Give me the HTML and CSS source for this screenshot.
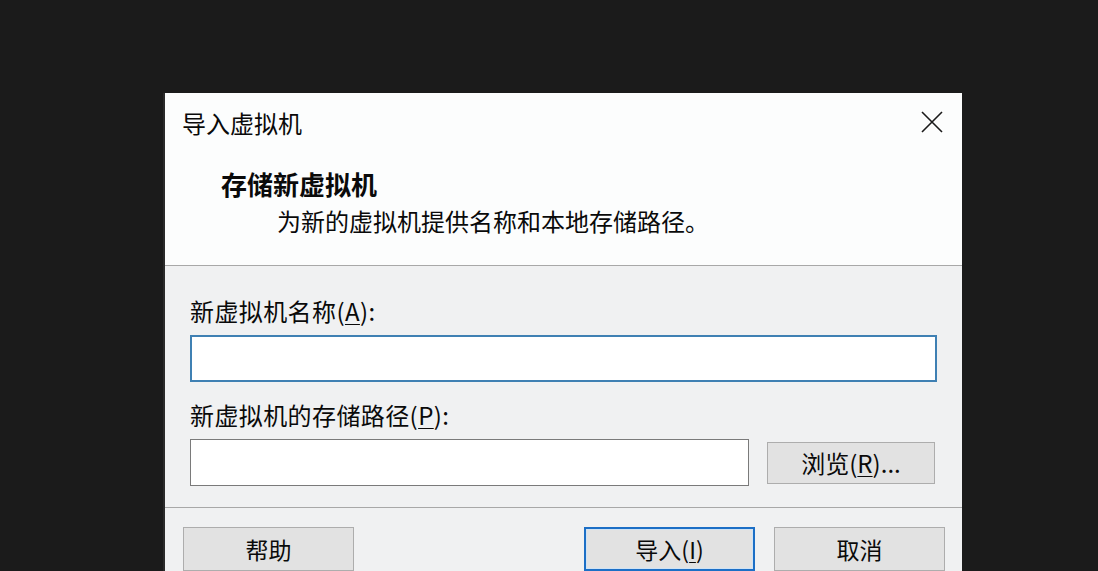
FILE: index.html
```html
<!DOCTYPE html>
<html lang="zh-CN">
<head>
<meta charset="utf-8">
<title>导入虚拟机</title>
<link rel="stylesheet" href="styles.css">
</head>
<body>
<div class="dialog">
  <div class="header">
    <div class="titlebar">
      <span class="title">导入虚拟机</span>
      <svg class="close" width="22" height="22" viewBox="0 0 22 22"><path d="M1 1 L21 21 M21 1 L1 21" stroke="#1a1a1a" stroke-width="1.6" fill="none"/></svg>
    </div>
    <div class="heading">存储新虚拟机</div>
    <div class="subtitle">为新的虚拟机提供名称和本地存储路径。</div>
  </div>
  <div class="content">
    <div class="label">新虚拟机名称(<u>A</u>):</div>
    <div class="input input-focus"></div>
    <div class="label label-second">新虚拟机的存储路径(<u>P</u>):</div>
    <div class="path-row">
      <div class="input input-path"></div>
      <div class="btn btn-browse">浏览(<u>R</u>)...</div>
    </div>
  </div>
  <div class="footer">
    <div class="btn">帮助</div>
    <div class="footer-right">
      <div class="btn btn-default">导入(<u>I</u>)</div>
      <div class="btn">取消</div>
    </div>
  </div>
</div>
</body>
</html>
```
FILE: styles.css
```css
html, body {
  margin: 0;
  padding: 0;
  background: #1b1b1b;
  height: 571px;
  overflow: hidden;
}
body {
  font-family: "Noto Sans CJK SC", "Noto Sans", sans-serif;
  color: #0a0a0a;
}
.dialog {
  width: 797px;
  margin: 93px 0 0 165px;
  background: #f0f1f2;
  box-shadow: -2px 0 0 #2a2a2a;
}
.header {
  background: #fcfdfd;
  height: 172px;
  border-bottom: 1px solid #a8a8a8;
  box-sizing: content-box;
}
.titlebar {
  display: flex;
  justify-content: space-between;
  align-items: center;
  padding: 15px 19px 0 17px;
  height: 30px;
}
.title {
  font-size: 24px;
  line-height: 30px;
}
.close {
  display: block;
  margin-top: -3px;
}
.heading {
  font-size: 26px;
  line-height: 32px;
  font-weight: bold;
  margin: 30px 0 0 56px;
}
.subtitle {
  font-size: 24px;
  line-height: 32px;
  margin: 5px 0 0 112px;
}
.content {
  padding: 30px 25px 21px 25px;
  border-bottom: 1px solid #a8a8a8;
}
.label {
  font-size: 24px;
  line-height: 30px;
  margin-bottom: 9px;
  letter-spacing: 0.4px;
}
.label u, .btn u {
  text-underline-offset: 3px;
  text-decoration-thickness: 1px;
}
.label-second {
  margin-top: 18px;
}
.input {
  background: #fff;
  height: 47px;
  box-sizing: border-box;
  border: 1px solid #7a7a7a;
}
.input-focus {
  border: 2px solid #3f80b3;
}
.path-row {
  display: flex;
  align-items: center;
  gap: 18px;
}
.input-path {
  width: 559px;
}
.btn {
  box-sizing: border-box;
  width: 171px;
  height: 44px;
  background: #e2e2e2;
  border: 1px solid #adadad;
  display: flex;
  justify-content: center;
  align-items: center;
  font-size: 23px;
  line-height: 30px;
}
.btn-browse {
  width: 168px;
  height: 42px;
  font-size: 24px;
}
.btn-default {
  border: 2px solid #1c6fc6;
  box-shadow: inset 0 0 0 1px #cfe3f5;
}
.footer {
  display: flex;
  justify-content: space-between;
  padding: 19px 17px 10px 18px;
}
.footer-right {
  display: flex;
  gap: 19px;
}
```
